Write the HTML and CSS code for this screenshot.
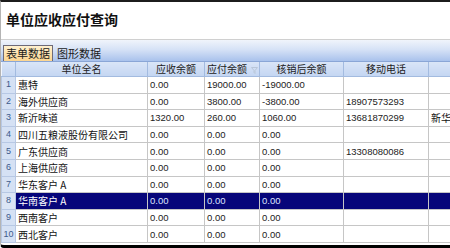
FILE: index.html
```html
<!DOCTYPE html>
<html>
<head>
    <title>单位应收应付查询</title>
    <link rel="stylesheet" href="styles.css">
</head>
<body>
    <div class="window">
        <div class="title-bar">
            <h1>单位应收应付查询</h1>
        </div>
        <div class="tab-strip">
            <span class="tab active">表单数据</span>
            <span class="tab">图形数据</span>
        </div>
        <table class="grid">
            <colgroup>
                <col class="c-no">
                <col class="c-name">
                <col class="c-recv">
                <col class="c-pay">
                <col class="c-after">
                <col class="c-phone">
                <col class="c-more">
            </colgroup>
            <thead>
                <tr>
                    <th></th>
                    <th>单位全名</th>
                    <th>应收余额</th>
                    <th class="filter-head">
                        <span>应付余额</span>
                        <svg class="funnel" width="7" height="7" viewBox="0 0 7 7">
                            <path d="M0.5 0.5 H6.5 L4 3.5 V6.5 L3 5.5 V3.5 Z" fill="none" stroke="#b9c6d8" stroke-width="1"/>
                        </svg>
                    </th>
                    <th>核销后余额</th>
                    <th>移动电话</th>
                    <th></th>
                </tr>
            </thead>
            <tbody>
                <tr><td class="no">1</td><td>惠特</td><td class="num">0.00</td><td class="num">19000.00</td><td class="num">-19000.00</td><td class="num"></td><td></td></tr>
                <tr><td class="no">2</td><td>海外供应商</td><td class="num">0.00</td><td class="num">3800.00</td><td class="num">-3800.00</td><td class="num">18907573293</td><td></td></tr>
                <tr><td class="no">3</td><td>新沂味道</td><td class="num">1320.00</td><td class="num">260.00</td><td class="num">1060.00</td><td class="num">13681870299</td><td>新华</td></tr>
                <tr><td class="no">4</td><td>四川五粮液股份有限公司</td><td class="num">0.00</td><td class="num">0.00</td><td class="num">0.00</td><td class="num"></td><td></td></tr>
                <tr><td class="no">5</td><td>广东供应商</td><td class="num">0.00</td><td class="num">0.00</td><td class="num">0.00</td><td class="num">13308080086</td><td></td></tr>
                <tr><td class="no">6</td><td>上海供应商</td><td class="num">0.00</td><td class="num">0.00</td><td class="num">0.00</td><td class="num"></td><td></td></tr>
                <tr><td class="no">7</td><td>华东客户 A</td><td class="num">0.00</td><td class="num">0.00</td><td class="num">0.00</td><td class="num"></td><td></td></tr>
                <tr class="selected"><td class="no">8</td><td>华南客户 A</td><td class="num">0.00</td><td class="num">0.00</td><td class="num">0.00</td><td class="num"></td><td></td></tr>
                <tr><td class="no">9</td><td>西南客户</td><td class="num">0.00</td><td class="num">0.00</td><td class="num">0.00</td><td class="num"></td><td></td></tr>
                <tr><td class="no">10</td><td>西北客户</td><td class="num">0.00</td><td class="num">0.00</td><td class="num">0.00</td><td class="num"></td><td></td></tr>
            </tbody>
        </table>
    </div>
</body>
</html>
```

FILE: styles.css
```css
body {
    margin: 0;
    background-color: #fff;
    font-family: "Noto Sans CJK SC", "Liberation Sans", sans-serif;
}
.window {
    width: 450px;
    height: 248px;
    overflow: hidden;
    box-sizing: border-box;
    border-top: 2px solid #1c1c1c;
    border-left: 1px solid #b4b4b4;
    border-bottom: 3px solid #000;
    border-bottom-left-radius: 4px;
    background-color: #fff;
}
.title-bar {
    height: 37px;
    padding-left: 5px;
    box-sizing: border-box;
    padding-top: 7px;
}
h1 {
    margin: 0;
    font-size: 14px;
    line-height: 20px;
    font-weight: 700;
    color: #111;
}
.tab-strip {
    height: 23px;
    box-sizing: border-box;
    border-top: 1px solid #d0d0d0;
    border-bottom: 1px solid #8aa6d6;
    background: linear-gradient(to bottom, #f0f4fb 0%, #d6e2f6 45%, #a9c2ec 100%);
    display: flex;
    align-items: flex-end;
    padding-left: 2px;
    gap: 2px;
}
.tab {
    font-size: 11px;
    line-height: 15px;
    height: 15px;
    padding: 0 2px;
    color: #1a1a1a;
}
.tab.active {
    border: 1px solid #6d6a78;
    border-bottom: none;
    background: linear-gradient(to bottom, #fff1cf 0%, #fbd590 100%);
}
.grid {
    border-collapse: collapse;
    table-layout: fixed;
    width: 460px;
    font-size: 10px;
}
.c-no { width: 14px; }
.c-name { width: 132px; }
.c-recv { width: 57px; }
.c-pay { width: 55px; }
.c-after { width: 84px; }
.c-phone { width: 85px; }
.c-more { width: 33px; }
th {
    height: 14px;
    padding: 0;
    font-weight: 400;
    color: #222;
    line-height: 14px;
    background: linear-gradient(to bottom, #d9e5f7 0%, #c4d6f2 100%);
    border-left: 1px solid #f2f6fd;
    border-right: 1px solid #a3bbe0;
    border-bottom: 1px solid #a3bbe0;
    white-space: nowrap;
    overflow: hidden;
}
.filter-head {
    text-align: left;
}
.filter-head span {
    padding-left: 2px;
}
.funnel {
    vertical-align: middle;
    margin-left: 2px;
}
td {
    height: 15.6px;
    padding: 0 0 0 2px;
    line-height: 15px;
    border: 1px solid #c6c6c6;
    color: #111;
    white-space: nowrap;
    overflow: hidden;
}
td.num {
    font-family: "Liberation Sans", sans-serif;
    font-size: 9.5px;
    color: #222;
}
td.no {
    padding: 0;
    text-align: center;
    font-family: "Liberation Sans", sans-serif;
    font-size: 9px;
    color: #3c5a8c;
    background-color: #d5e1f4;
    border-color: #b7c8e4;
}
tr.selected td {
    background-color: #07067a;
    color: #fff;
}
tr.selected td.num {
    color: #dfe4ff;
}
tr.selected td.no {
    background-color: #dbe5f5;
    color: #3c5a8c;
}
```
